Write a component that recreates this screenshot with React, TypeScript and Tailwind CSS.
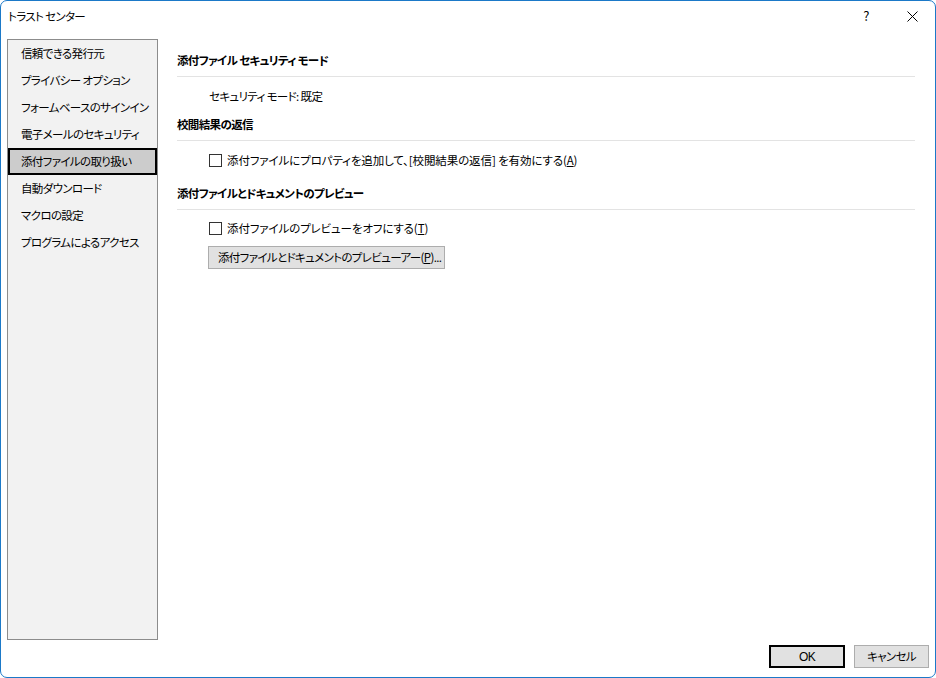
import type { ReactNode } from "react";

const FONT =
  "font-['Noto_Sans_CJK_JP','Noto_Sans',sans-serif] [font-feature-settings:'palt'] tracking-[-0.04em] whitespace-nowrap";
const TXT = "text-[11.5px]";

const NAV = [
  "信頼できる発行元",
  "プライバシー オプション",
  "フォームベースのサインイン",
  "電子メールのセキュリティ",
  "添付ファイルの取り扱い",
  "自動ダウンロード",
  "マクロの設定",
  "プログラムによるアクセス",
];

const SELECTED = 4;

function Heading({ children, className }: { children: ReactNode; className?: string }) {
  return (
    <div className={className}>
      <h2 className={`h-4 ${TXT} font-bold leading-4 text-black`}>{children}</h2>
      <div className="mt-2 h-px w-full bg-[#e3e3e3]" />
    </div>
  );
}

function Checkbox({ children, className }: { children: ReactNode; className?: string }) {
  return (
    <label className={`flex h-4 items-center gap-[5px] pl-8 ${TXT} leading-4 ${className ?? ""}`}>
      <span className="h-[13px] w-[13px] shrink-0 border border-[#333333] bg-white" />
      <span className="tracking-[-0.01em]">{children}</span>
    </label>
  );
}

function CloseIcon() {
  return (
    <svg width="11" height="11" viewBox="0 0 11 11" fill="none" stroke="#000" strokeWidth="1">
      <path d="M0.5 0.5 L10.5 10.5 M10.5 0.5 L0.5 10.5" />
    </svg>
  );
}

export default function App() {
  return (
    <div className={`${FONT} h-[678px] w-[936px] bg-white text-black`}>
      <div className="flex h-full w-full flex-col rounded-[7px] border border-[#1b79c8] bg-white">
        {/* title bar */}
        <div className="flex h-[30px] shrink-0 items-center">
          <span className={`pl-[7px] ${TXT} leading-4`}>トラスト センター</span>
          <div className="ml-auto flex h-full items-center">
            <span className="w-[46px] text-center text-[13px]">?</span>
            <span className="flex w-[46px] justify-center">
              <CloseIcon />
            </span>
          </div>
        </div>

        {/* body */}
        <div className="flex h-[609px] shrink-0 pt-2">
          <nav className="ml-[6px] h-[601px] w-[151px] shrink-0 border border-[#8c8c8c] bg-[#f2f2f2]">
            <ul className="flex flex-col">
              {NAV.map((label, i) =>
                i === SELECTED ? (
                  <li
                    key={label}
                    className={`flex h-[27px] items-center border-2 border-black bg-[#cccccc] pl-[11px] ${TXT}`}
                  >
                    {label}
                  </li>
                ) : (
                  <li key={label} className={`flex h-[27px] items-center pl-[13px] ${TXT}`}>
                    {label}
                  </li>
                )
              )}
            </ul>
          </nav>

          <main className="ml-[19px] mr-[20px] flex flex-1 flex-col pt-[13px]">
            <Heading>添付ファイル セキュリティ モード</Heading>
            <p className={`mt-[11px] h-4 pl-8 ${TXT} leading-4`}>セキュリティ モード: 既定</p>

            <Heading className="mt-3">校閲結果の返信</Heading>
            <Checkbox className="mt-[11px]">
              添付ファイルにプロパティを追加して、[校閲結果の返信] を有効にする(<u>A</u>)
            </Checkbox>

            <Heading className="mt-[17px]">添付ファイルとドキュメントのプレビュー</Heading>
            <Checkbox className="mt-[10px]">
              添付ファイルのプレビューをオフにする(<u>T</u>)
            </Checkbox>
            <div className="mt-[7px] pl-[31px]">
              <button
                type="button"
                className={`h-[23px] w-[237px] border border-[#adadad] bg-[#e1e1e1] pl-[9px] text-left ${TXT} leading-4`}
              >
                添付ファイルとドキュメントのプレビューアー(<u>P</u>)...
              </button>
            </div>
          </main>
        </div>

        {/* footer */}
        <div className="flex h-[37px] shrink-0 items-start justify-end gap-[9px] pr-[6px] pt-[5px]">
          <button
            type="button"
            className={`h-[23px] w-[76px] border-2 border-black bg-[#e1e1e1] font-['Liberation_Sans',sans-serif] text-[12px]`}
          >
            OK
          </button>
          <button
            type="button"
            className={`h-[23px] w-[75px] border border-[#adadad] bg-[#e1e1e1] ${TXT}`}
          >
            キャンセル
          </button>
        </div>
      </div>
    </div>
  );
}
